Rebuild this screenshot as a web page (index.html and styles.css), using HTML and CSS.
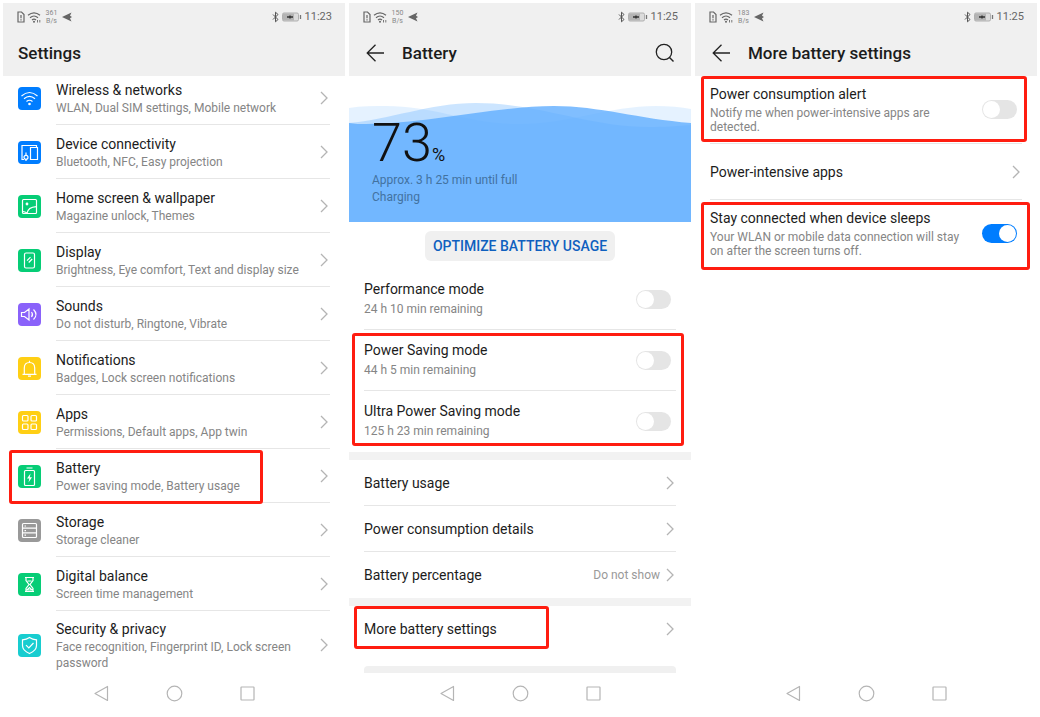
FILE: index.html
```html
<!DOCTYPE html>
<html lang="en">
<head>
    <meta charset="UTF-8">
    <meta name="viewport" content="width=device-width, initial-scale=1.0">
    <title>Battery settings</title>
    <link rel="stylesheet" href="styles.css">
</head>
<body>

    <!-- Shared icons -->
    <svg class="sprite" aria-hidden="true">
        <symbol id="status-left" viewBox="0 0 24 14">
            <path d="M1 2h3.500l2.500 2.500v7.500H1z" fill="none" stroke="#666" stroke-width="1.200"/>
            <path d="M4 5v3.200M4 9.300v1.300" stroke="#666" stroke-width="1.200"/>
            <path d="M11 5.300q6-5 12 0M13 7.700q4-3.400 8 0M15 10q2-1.800 4 0" fill="none" stroke="#666" stroke-width="1.200"/>
            <circle cx="17" cy="11.800" r="1" fill="#666"/>
            <path d="M20.500 10v2.500M22.800 10v2.500" stroke="#777" stroke-width="1"/>
        </symbol>
        <symbol id="plane" viewBox="0 0 10 10">
            <path d="M0 5L9.500 .5 8 3.800 10 5 8 6.200 9.500 9.500z" fill="#666"/>
        </symbol>
        <symbol id="status-right" viewBox="0 0 30 12">
            <path d="M1 3.500l5 5-2.500 2.300V1.200L6 3.500l-5 5" fill="none" stroke="#555" stroke-width="1"/>
            <rect x="10.500" y="2" width="16" height="8" rx="1.500" fill="#dcdcdc" stroke="#b0b0b0"/>
            <rect x="11" y="2.500" width="11" height="7" fill="#b4b4b4"/>
            <path d="M28.500 4v4" stroke="#777" stroke-width="1.300"/>
            <path d="M15 6h6M18 4.500v3" stroke="#333" stroke-width="1.400"/>
        </symbol>
        <symbol id="chevron" viewBox="0 0 8 14">
            <path d="M1 1l6 6-6 6" fill="none" stroke="#b4b4b4" stroke-width="1.300"/>
        </symbol>
        <symbol id="arrow" viewBox="0 0 18 18">
            <path d="M18 9H1M9.500 .7L1.200 9l8.300 8.300" fill="none" stroke="#222" stroke-width="1.300"/>
        </symbol>
        <symbol id="nav-back" viewBox="0 0 17 17">
            <path d="M14.500 1.500v14L2 8.500z" fill="none" stroke="#b5b5b5" stroke-width="1.200" stroke-linejoin="round"/>
        </symbol>
        <symbol id="nav-home" viewBox="0 0 17 17">
            <circle cx="8.500" cy="8.500" r="7.300" fill="none" stroke="#b5b5b5" stroke-width="1.200"/>
        </symbol>
        <symbol id="nav-recent" viewBox="0 0 17 17">
            <rect x="2" y="2" width="13" height="13" rx=".5" fill="none" stroke="#b5b5b5" stroke-width="1.200"/>
        </symbol>
    </svg>

    <main class="phones">

        <!-- Settings -->
        <section class="phone">
            <header class="header">
                <div class="status">
                    <svg class="status-left"><use href="#status-left"/></svg>
                    <span class="speed">361<br>B/s</span>
                    <svg class="plane"><use href="#plane"/></svg>
                    <svg class="status-right"><use href="#status-right"/></svg>
                    <span class="time">11:23</span>
                </div>
                <div class="title-bar">
                    <h1>Settings</h1>
                </div>
            </header>

            <nav class="menu">
                <a class="item" href="#">
                    <svg class="icon blue" viewBox="0 0 23 23"><path d="M3.500 9q8-7 16 0M6 11.800q5.500-4.700 11 0M8.500 14.500q3-2.500 6 0"/><circle class="solid" cx="11.500" cy="17" r="1.300"/></svg>
                    <span class="text"><span class="name">Wireless &amp; networks</span><span class="desc">WLAN, Dual SIM settings, Mobile network</span></span>
                    <svg class="chevron"><use href="#chevron"/></svg>
                </a>
                <a class="item" href="#">
                    <svg class="icon blue" viewBox="0 0 23 23"><path d="M6 18.500H4V4.500h14.500v2M12.500 6.500h7v12h-7zM8 11.500v3M8 18v2"/><circle cx="8" cy="16.300" r="2"/></svg>
                    <span class="text"><span class="name">Device connectivity</span><span class="desc">Bluetooth, NFC, Easy projection</span></span>
                    <svg class="chevron"><use href="#chevron"/></svg>
                </a>
                <a class="item" href="#">
                    <svg class="icon green" viewBox="0 0 23 23"><rect x="4.500" y="4.500" width="14" height="14" rx="1"/><circle class="solid" cx="9" cy="9" r="1.400"/><path d="M9 18.500c.5-4 4-6.500 9.500-6.800M5 16.500q3 .5 4.500 2"/></svg>
                    <span class="text"><span class="name">Home screen &amp; wallpaper</span><span class="desc">Magazine unlock, Themes</span></span>
                    <svg class="chevron"><use href="#chevron"/></svg>
                </a>
                <a class="item" href="#">
                    <svg class="icon green" viewBox="0 0 23 23"><rect x="6.500" y="4" width="10" height="15" rx="1.500"/><path d="M9 11.700l3.500-3.500M10.700 13.500l3.500-3.500"/></svg>
                    <span class="text"><span class="name">Display</span><span class="desc">Brightness, Eye comfort, Text and display size</span></span>
                    <svg class="chevron"><use href="#chevron"/></svg>
                </a>
                <a class="item" href="#">
                    <svg class="icon purple" viewBox="0 0 23 23"><path d="M3.500 9.500v4h3l4.500 3.500V6L6.500 9.500zM13.500 9q2 2.500 0 5M15.500 6.500q5 5 0 10"/></svg>
                    <span class="text"><span class="name">Sounds</span><span class="desc">Do not disturb, Ringtone, Vibrate</span></span>
                    <svg class="chevron"><use href="#chevron"/></svg>
                </a>
                <a class="item" href="#">
                    <svg class="icon yellow" viewBox="0 0 23 23"><path d="M4.500 17.300h14M6.300 17v-6q0-5.500 5.200-5.500t5.200 5.500v6M11.500 5.500V3.800M10 19.200h3"/></svg>
                    <span class="text"><span class="name">Notifications</span><span class="desc">Badges, Lock screen notifications</span></span>
                    <svg class="chevron"><use href="#chevron"/></svg>
                </a>
                <a class="item" href="#">
                    <svg class="icon yellow" viewBox="0 0 23 23"><rect x="4.500" y="4.500" width="5.500" height="5.500" rx="1"/><rect x="13" y="4.500" width="5.500" height="5.500" rx="1"/><rect x="4.500" y="13" width="5.500" height="5.500" rx="1"/><rect x="13" y="13" width="5.500" height="5.500" rx="1"/></svg>
                    <span class="text"><span class="name">Apps</span><span class="desc">Permissions, Default apps, App twin</span></span>
                    <svg class="chevron"><use href="#chevron"/></svg>
                </a>
                <a class="item" href="#">
                    <svg class="icon green" viewBox="0 0 23 23"><rect x="6.500" y="5.500" width="10" height="15" rx="1"/><path d="M8.500 3h6"/><path class="solid" d="M12.500 8.500l-3.500 5h2.300l-.8 4 3.500-5.200h-2.200z"/></svg>
                    <span class="text"><span class="name">Battery</span><span class="desc">Power saving mode, Battery usage</span></span>
                    <svg class="chevron"><use href="#chevron"/></svg>
                    <span class="mark mark-battery"></span>
                </a>
                <a class="item" href="#">
                    <svg class="icon gray" viewBox="0 0 23 23"><rect x="4.500" y="4.500" width="14" height="14" rx="1"/><path d="M4.500 9.200h14M4.500 13.900h14M6.500 7h1.500M6.500 11.600h1.500M6.500 16.200h1.500"/></svg>
                    <span class="text"><span class="name">Storage</span><span class="desc">Storage cleaner</span></span>
                    <svg class="chevron"><use href="#chevron"/></svg>
                </a>
                <a class="item" href="#">
                    <svg class="icon green" viewBox="0 0 23 23"><path d="M7 4.500h9M7 18.500h9M8 4.500v3l3 4-3 4v3M15 4.500v3l-3 4 3 4v3M9.500 8h4M9 17l2.500-2.500L14 17z"/></svg>
                    <span class="text"><span class="name">Digital balance</span><span class="desc">Screen time management</span></span>
                    <svg class="chevron"><use href="#chevron"/></svg>
                </a>
                <a class="item" href="#">
                    <svg class="icon cyan" viewBox="0 0 23 23"><path d="M11.500 3.500q3 2 7 2.300v5.700q0 5-7 8-7-3-7-8V5.800q4-.3 7-2.300zM8 11.200l2.800 2.800 4.700-5"/></svg>
                    <span class="text"><span class="name">Security &amp; privacy</span><span class="desc">Face recognition, Fingerprint ID, Lock screen password</span></span>
                    <svg class="chevron"><use href="#chevron"/></svg>
                </a>
            </nav>

            <div class="nav-bar">
                <button aria-label="Back"><svg><use href="#nav-back"/></svg></button>
                <button aria-label="Home"><svg><use href="#nav-home"/></svg></button>
                <button aria-label="Recent apps"><svg><use href="#nav-recent"/></svg></button>
            </div>
        </section>

        <!-- Battery -->
        <section class="phone">
            <header class="header">
                <div class="status">
                    <svg class="status-left"><use href="#status-left"/></svg>
                    <span class="speed">150<br>B/s</span>
                    <svg class="plane"><use href="#plane"/></svg>
                    <svg class="status-right"><use href="#status-right"/></svg>
                    <span class="time">11:25</span>
                </div>
                <div class="title-bar">
                    <button class="back" aria-label="Back"><svg><use href="#arrow"/></svg></button>
                    <h1>Battery</h1>
                    <button class="search" aria-label="Search">
                        <svg viewBox="0 0 20 20"><circle cx="9" cy="9" r="7.700" fill="none" stroke="#222" stroke-width="1.300"/><path d="M14.500 14.500l4 4" stroke="#222" stroke-width="1.400"/></svg>
                    </button>
                </div>
            </header>

            <div class="hero">
                <svg class="waves" viewBox="0 0 342 120" preserveAspectRatio="none">
                    <path opacity=".16" d="M0 6C12 4 25 4 37 4C85 4 120 22 170 22C220 22 260 4 307 4C320 4 332 5 342 7V120H0Z"/>
                    <path opacity=".32" d="M0 21C40 18 80 1 127 1C190 1 240 25 300 25C315 25 330 24 342 23V120H0Z"/>
                    <path opacity=".8" d="M0 21C6 22 11 22 17 22C75 22 150 4 205 4C250 4 290 17 342 21V120H0Z"/>
                </svg>
                <div class="level"><span class="number">73</span><span class="percent">%</span></div>
                <p>Approx. 3 h 25 min until full<br>Charging</p>
            </div>

            <button class="optimize">OPTIMIZE BATTERY USAGE</button>

            <label class="row mode">
                <span class="text"><span class="name">Performance mode</span><span class="desc">24 h 10 min remaining</span></span>
                <input type="checkbox" class="switch">
            </label>
            <div class="saving">
                <label class="row mode">
                    <span class="text"><span class="name">Power Saving mode</span><span class="desc">44 h 5 min remaining</span></span>
                    <input type="checkbox" class="switch">
                </label>
                <label class="row mode last">
                    <span class="text"><span class="name">Ultra Power Saving mode</span><span class="desc">125 h 23 min remaining</span></span>
                    <input type="checkbox" class="switch">
                </label>
                <span class="mark mark-saving"></span>
            </div>
            <div class="band"></div>
            <a class="row link" href="#"><span class="name">Battery usage</span><svg class="chevron"><use href="#chevron"/></svg></a>
            <a class="row link" href="#"><span class="name">Power consumption details</span><svg class="chevron"><use href="#chevron"/></svg></a>
            <a class="row link last" href="#"><span class="name">Battery percentage</span><span class="value">Do not show</span><svg class="chevron"><use href="#chevron"/></svg></a>
            <div class="band"></div>
            <a class="row link last" href="#"><span class="name">More battery settings</span><svg class="chevron"><use href="#chevron"/></svg><span class="mark mark-more"></span></a>
            <div class="card-top"></div>

            <div class="nav-bar">
                <button aria-label="Back"><svg><use href="#nav-back"/></svg></button>
                <button aria-label="Home"><svg><use href="#nav-home"/></svg></button>
                <button aria-label="Recent apps"><svg><use href="#nav-recent"/></svg></button>
            </div>
        </section>

        <!-- More battery settings -->
        <section class="phone">
            <header class="header">
                <div class="status">
                    <svg class="status-left"><use href="#status-left"/></svg>
                    <span class="speed">183<br>B/s</span>
                    <svg class="plane"><use href="#plane"/></svg>
                    <svg class="status-right"><use href="#status-right"/></svg>
                    <span class="time">11:25</span>
                </div>
                <div class="title-bar">
                    <button class="back" aria-label="Back"><svg><use href="#arrow"/></svg></button>
                    <h1>More battery settings</h1>
                </div>
            </header>

            <label class="row option">
                <span class="text"><span class="name">Power consumption alert</span><span class="desc">Notify me when power-intensive apps are detected.</span></span>
                <input type="checkbox" class="switch">
                <span class="mark mark-alert"></span>
            </label>
            <a class="row link tall" href="#"><span class="name">Power-intensive apps</span><svg class="chevron"><use href="#chevron"/></svg></a>
            <label class="row option last">
                <span class="text"><span class="name">Stay connected when device sleeps</span><span class="desc">Your WLAN or mobile data connection will stay on after the screen turns off.</span></span>
                <input type="checkbox" class="switch" checked>
                <span class="mark mark-stay"></span>
            </label>

            <div class="nav-bar">
                <button aria-label="Back"><svg><use href="#nav-back"/></svg></button>
                <button aria-label="Home"><svg><use href="#nav-home"/></svg></button>
                <button aria-label="Recent apps"><svg><use href="#nav-recent"/></svg></button>
            </div>
        </section>

    </main>

</body>
</html>
```

FILE: styles.css
```css
* {
    box-sizing: border-box;
}
body {
    margin: 0;
    padding: 3px 3px 7px;
    background-color: white;
    color: #1c1c1c;
    font-family: Roboto, Arial, sans-serif;
    font-size: 14px;
}
button {
    border: none;
    padding: 0;
    background: none;
    font-family: inherit;
    cursor: pointer;
}
a {
    color: inherit;
    text-decoration: none;
}
svg {
    display: block;
    flex-shrink: 0;
}
.sprite {
    position: absolute;
    width: 0;
    height: 0;
}
.phones {
    display: grid;
    grid-template-columns: repeat(3, 1fr);
    gap: 4px;
    min-height: calc(100vh - 10px);
}
.phone {
    display: flex;
    flex-direction: column;
    min-width: 0;
}

/* Header */
.header {
    background-color: #f0f0f0;
}
.status {
    display: flex;
    align-items: center;
    height: 27px;
    padding: 0 13px 0 14px;
    color: #666;
}
.status-left {
    width: 24px;
    height: 14px;
}
.speed {
    width: 13px;
    margin: 0 4px;
    color: #888;
    font-size: 7px;
    line-height: 8px;
    text-align: center;
}
.plane {
    width: 10px;
    height: 10px;
}
.status-right {
    width: 30px;
    height: 12px;
    margin-left: auto;
    margin-right: 3px;
}
.time {
    font-size: 11px;
}
.title-bar {
    display: flex;
    align-items: center;
    height: 46px;
    padding: 0 16px 0 15px;
}
h1 {
    margin: 0;
    font-size: 17px;
    line-height: 20px;
    font-weight: 500;
}
.back {
    width: 38px;
    padding-left: 2px;
}
.back svg {
    width: 18px;
    height: 18px;
}
.search {
    margin-left: auto;
}
.search svg {
    width: 20px;
    height: 20px;
}

/* Text */
.text {
    flex: 1;
    min-width: 0;
}
.name,
.desc {
    display: block;
}
.name {
    line-height: 20px;
}
.desc {
    color: #858585;
    font-size: 12px;
    line-height: 16px;
}
.chevron {
    width: 8px;
    height: 14px;
}

/* Settings menu */
.item {
    position: relative;
    display: flex;
    align-items: center;
    gap: 15px;
    padding: 9px 17px 9px 15px;
}
.item:first-child {
    padding-top: 4px;
}
.item:last-child {
    padding-top: 8px;
    padding-bottom: 5px;
}
.item:not(:last-child)::after {
    content: "";
    position: absolute;
    left: 53px;
    right: 15px;
    bottom: 0;
    height: 1px;
    background-color: #e6e6e6;
}
.icon {
    width: 23px;
    height: 23px;
    border-radius: 4px;
    fill: none;
    stroke: white;
    stroke-width: 1.2;
}
.icon .solid {
    fill: white;
    stroke: none;
}
.blue {
    background-color: #007dff;
}
.green {
    background-color: #06cd76;
}
.purple {
    background-color: #8a62fa;
}
.yellow {
    background-color: #ffcf14;
}
.gray {
    background-color: #999;
}
.cyan {
    background-color: #18cdd0;
}

/* Battery level */
.hero {
    position: relative;
    height: 146px;
    padding: 50px 23px 0;
}
.waves {
    position: absolute;
    left: 0;
    bottom: 0;
    width: 100%;
    height: 120px;
    fill: #60aeff;
}
.level,
.hero p {
    position: relative;
}
.level {
    display: flex;
    align-items: baseline;
    line-height: 34px;
    color: #111;
}
.number {
    font-size: 54px;
    font-weight: 300;
}
.percent {
    font-size: 18px;
}
.hero p {
    margin: 0;
    color: #42729f;
    font-size: 12px;
    line-height: 17px;
}
.optimize {
    align-self: center;
    height: 30px;
    margin: 9px 0 8px;
    padding: 0 8px;
    border-radius: 6px;
    background-color: #f0f0f0;
    color: #0f60bf;
    font-size: 14px;
    font-weight: 500;
}

/* Rows */
.row {
    position: relative;
    display: flex;
    align-items: center;
    padding: 0 15px;
}
.row::after {
    content: "";
    position: absolute;
    left: 15px;
    right: 15px;
    bottom: 0;
    height: 1px;
    background-color: #e6e6e6;
}
.last::after {
    display: none;
}
.mode {
    padding-top: 10px;
    padding-bottom: 11px;
}
.mode .desc {
    line-height: 20px;
}
.link {
    min-height: 46px;
    padding-right: 17px;
}
.link .name {
    flex: 1;
}
.tall {
    min-height: 56px;
}
.value {
    margin-right: 6px;
    color: #999;
    font-size: 12px;
}
.option {
    padding-top: 8px;
    padding-bottom: 10px;
}
.option .text {
    padding-right: 12px;
}
.option .desc {
    margin-top: 2px;
    line-height: 14px;
}
.saving {
    position: relative;
}
.band {
    height: 8px;
    background-color: #f2f2f2;
}
.card-top {
    height: 7px;
    margin: 14px 15px 0;
    border-radius: 4px 4px 0 0;
    background-color: #f0f0f0;
}

/* Switch */
.switch {
    appearance: none;
    flex-shrink: 0;
    display: flex;
    width: 35px;
    height: 19px;
    margin: 0 5px 0 0;
    padding: 1px;
    border-radius: 10px;
    background-color: #e5e5e5;
    cursor: pointer;
}
.switch::before {
    content: "";
    width: 17px;
    height: 17px;
    border-radius: 50%;
    background-color: white;
}
.switch:checked {
    justify-content: flex-end;
    background-color: #007dff;
}

/* Red frames over the steps to follow */
.mark {
    position: absolute;
    z-index: 1;
    border: 3px solid #ff1d10;
    border-radius: 3px;
    pointer-events: none;
}
.mark-battery {
    left: 6px;
    width: 254px;
    top: 1px;
    bottom: -1px;
}
.mark-saving {
    left: 3px;
    right: 7px;
    top: 3px;
    bottom: 6px;
}
.mark-more {
    left: 5px;
    width: 195px;
    top: 0;
    bottom: 3px;
}
.mark-alert {
    left: 6px;
    right: 10px;
    top: 0;
    bottom: 2px;
}
.mark-stay {
    left: 6px;
    right: 7px;
    top: 2px;
    bottom: -2px;
}

/* Android buttons */
.nav-bar {
    display: flex;
    justify-content: center;
    align-items: center;
    gap: 56px;
    height: 34px;
    margin-top: auto;
}
.nav-bar svg {
    width: 17px;
    height: 17px;
}
```
